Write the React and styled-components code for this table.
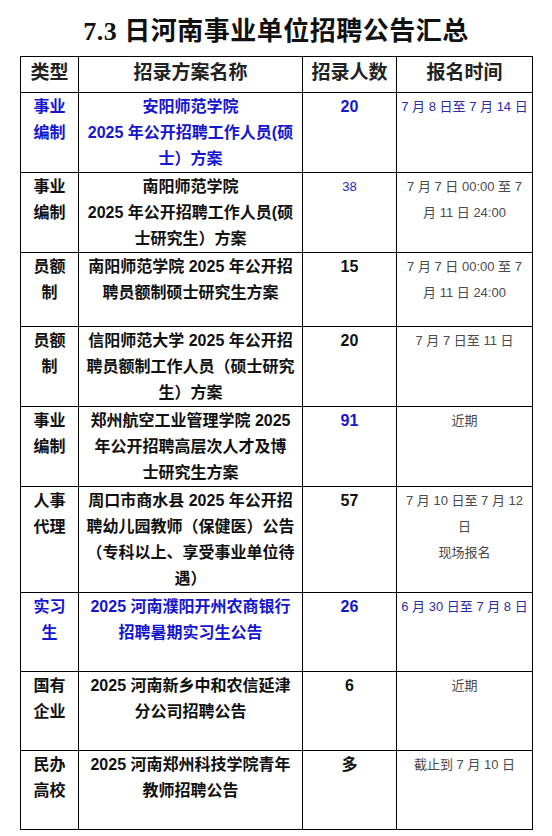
import React from "react";
import styled, { createGlobalStyle } from "styled-components";

const Global = createGlobalStyle`
  html, body { margin: 0; padding: 0; background: #fff; }
  body { font-family: "Liberation Sans", "Noto Sans CJK SC", sans-serif; }
`;

const Page = styled.div`
  width: 552px;
  padding: 0 20px;
  box-sizing: border-box;
`;

const Title = styled.h1`
  margin: 0;
  height: 56px;
  display: flex;
  align-items: center;
  justify-content: center;
  font-family: "Liberation Serif", "Noto Sans CJK SC", serif;
  font-size: 26px;
  font-weight: 700;
  color: #111;
  letter-spacing: 0.5px;
`;

const Table = styled.table`
  width: 512px;
  border-collapse: collapse;
  table-layout: fixed;
`;

const HeadCell = styled.th`
  border: 1px solid #000;
  height: 36px;
  padding: 0 0 3px;
  box-sizing: border-box;
  font-family: "Liberation Serif", "Noto Sans CJK SC", serif;
  font-size: 19px;
  font-weight: 700;
  color: #222;
  text-align: center;
  vertical-align: middle;
  line-height: 24px;
`;

const Row = styled.tr`
  height: ${(p) => p.$h}px;
`;

const Cell = styled.td`
  border: 1px solid #000;
  padding: 1px 2px 0;
  vertical-align: top;
  text-align: center;
  color: ${(p) => (p.$blue ? "#1616cf" : "#111")};
`;

const TypeText = styled.div`
  font-size: 16px;
  font-weight: 700;
  line-height: 26px;
  width: 34px;
  margin: 0 auto;
`;

const Line = styled.div`
  font-size: 16px;
  font-weight: 700;
  line-height: 26px;
  white-space: nowrap;
`;

const Count = styled.div`
  font-size: ${(p) => (p.$light ? 13 : 16)}px;
  font-weight: ${(p) => (p.$light ? 400 : 700)};
  line-height: 26px;
  color: ${(p) => (p.$light ? "#2a2ab8" : "inherit")};
`;

const DateLine = styled.div`
  font-size: 13px;
  line-height: 26px;
  white-space: nowrap;
  color: ${(p) => (p.$blue ? "#2c2ca6" : "#4a4a4a")};
`;

const rows = [
  {
    h: 79,
    blue: true,
    type: "事业编制",
    name: ["安阳师范学院", "2025 年公开招聘工作人员(硕", "士）方案"],
    count: "20",
    date: ["7 月 8 日至 7 月 14 日"],
  },
  {
    h: 80,
    type: "事业编制",
    name: ["南阳师范学院", "2025 年公开招聘工作人员(硕", "士研究生）方案"],
    count: "38",
    countLight: true,
    date: ["7 月 7 日 00:00 至 7", "月 11 日 24:00"],
  },
  {
    h: 74,
    type: "员额制",
    name: ["南阳师范学院 2025 年公开招", "聘员额制硕士研究生方案"],
    count: "15",
    date: ["7 月 7 日 00:00 至 7", "月 11 日 24:00"],
  },
  {
    h: 79,
    type: "员额制",
    name: ["信阳师范大学 2025 年公开招", "聘员额制工作人员（硕士研究", "生）方案"],
    count: "20",
    date: ["7 月 7 日至 11 日"],
  },
  {
    h: 79,
    type: "事业编制",
    name: ["郑州航空工业管理学院 2025", "年公开招聘高层次人才及博", "士研究生方案"],
    count: "91",
    countBlue: true,
    date: ["近期"],
  },
  {
    h: 105,
    type: "人事代理",
    name: ["周口市商水县 2025 年公开招", "聘幼儿园教师（保健医）公告", "（专科以上、享受事业单位待", "遇）"],
    count: "57",
    date: ["7 月 10 日至 7 月 12", "日", "现场报名"],
  },
  {
    h: 79,
    blue: true,
    type: "实习生",
    name: ["2025 河南濮阳开州农商银行", "招聘暑期实习生公告"],
    count: "26",
    date: ["6 月 30 日至 7 月 8 日"],
  },
  {
    h: 79,
    type: "国有企业",
    name: ["2025 河南新乡中和农信延津", "分公司招聘公告"],
    count: "6",
    date: ["近期"],
  },
  {
    h: 79,
    type: "民办高校",
    name: ["2025 河南郑州科技学院青年", "教师招聘公告"],
    count: "多",
    date: ["截止到 7 月 10 日"],
  },
];

export default function App() {
  return (
    <>
      <Global />
      <Page>
        <Title>7.3 日河南事业单位招聘公告汇总</Title>
        <Table>
          <colgroup>
            <col style={{ width: 58 }} />
            <col style={{ width: 224 }} />
            <col style={{ width: 94 }} />
            <col style={{ width: 136 }} />
          </colgroup>
          <thead>
            <tr>
              <HeadCell>类型</HeadCell>
              <HeadCell>招录方案名称</HeadCell>
              <HeadCell>招录人数</HeadCell>
              <HeadCell>报名时间</HeadCell>
            </tr>
          </thead>
          <tbody>
            {rows.map((r, i) => (
              <Row key={i} $h={r.h}>
                <Cell $blue={r.blue}>
                  <TypeText>{r.type}</TypeText>
                </Cell>
                <Cell $blue={r.blue}>
                  {r.name.map((l, j) => (
                    <Line key={j}>{l}</Line>
                  ))}
                </Cell>
                <Cell $blue={r.blue || r.countBlue}>
                  <Count $light={r.countLight}>{r.count}</Count>
                </Cell>
                <Cell>
                  {r.date.map((d, j) => (
                    <DateLine key={j} $blue={r.blue}>
                      {d}
                    </DateLine>
                  ))}
                </Cell>
              </Row>
            ))}
          </tbody>
        </Table>
      </Page>
    </>
  );
}
